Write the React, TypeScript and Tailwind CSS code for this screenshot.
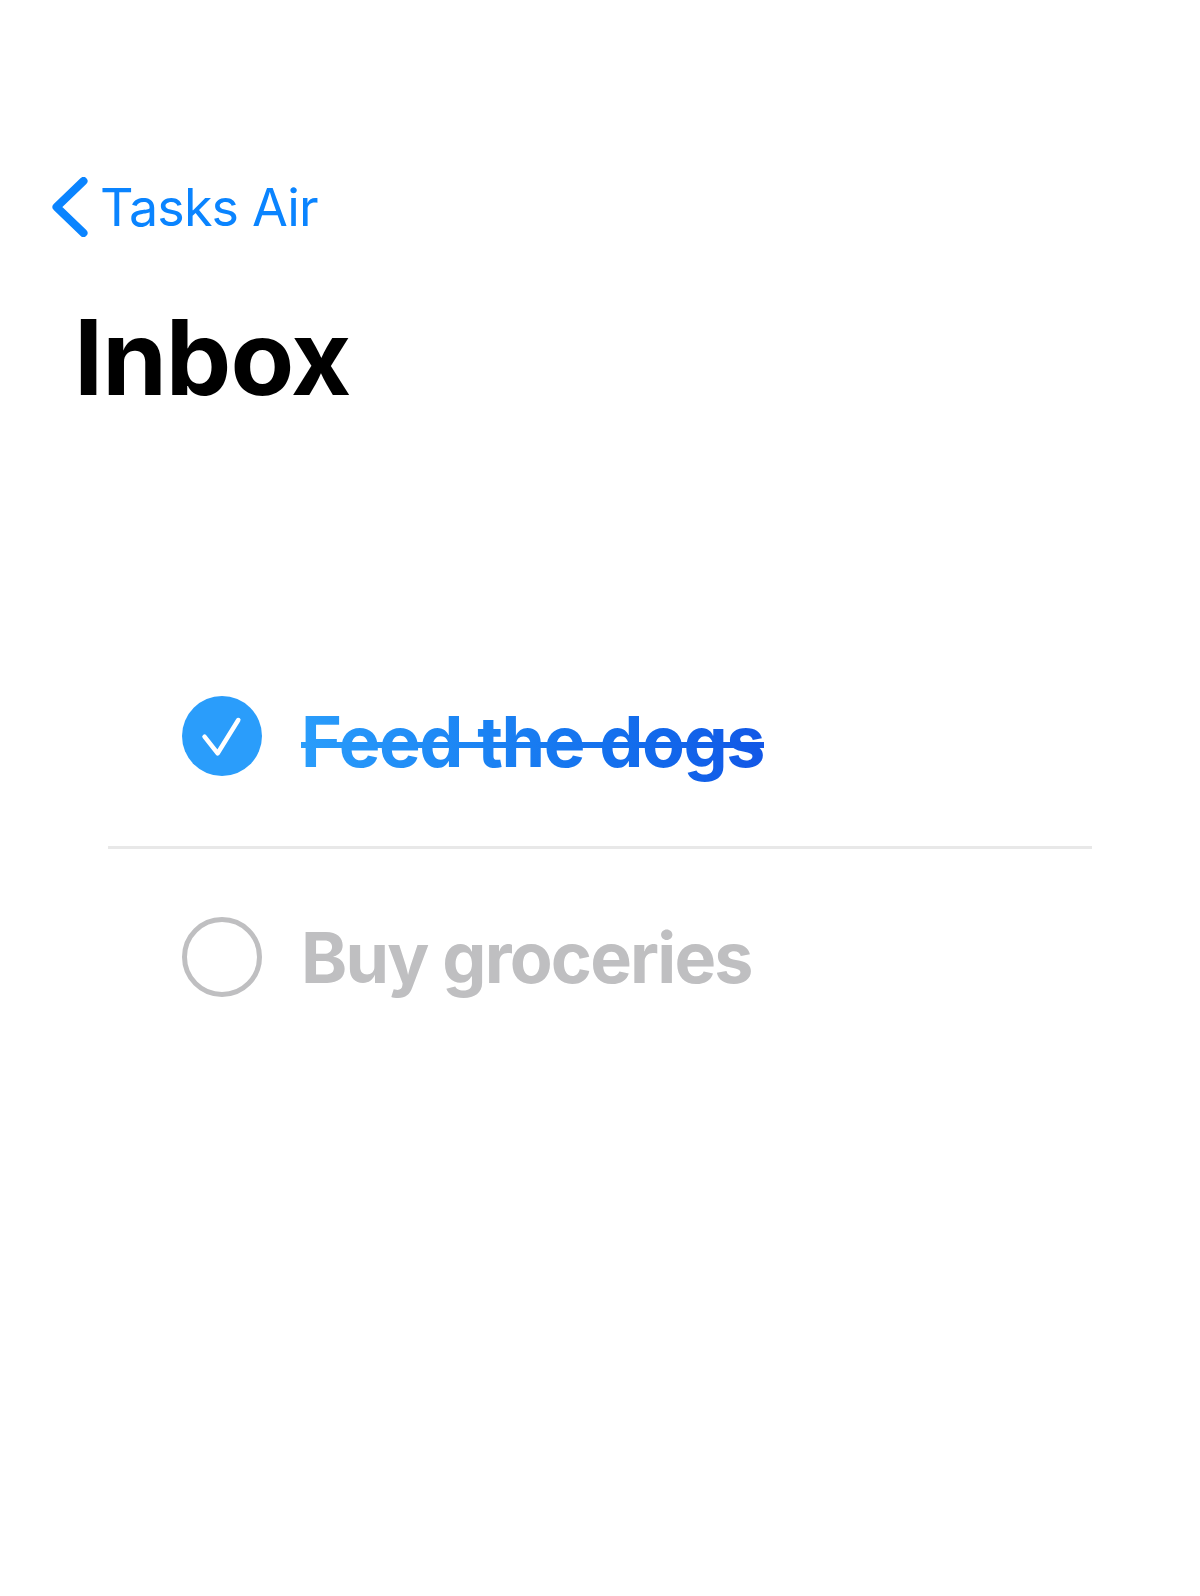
const FONT = "font-['Inter','Liberation_Sans',sans-serif]";

export default function App() {
  return (
    <div className={`w-[1200px] h-[1596px] bg-white ${FONT}`}>
      <header className="pt-[177px] pl-[52px]">
        <div className="flex items-center h-[60px] gap-[12px]">
          <svg width="36" height="60" viewBox="0 0 36 60" fill="none" className="text-[#0a84ff]">
            <path d="M31.5 4 L4.5 30 L31.5 56" stroke="currentColor" strokeWidth="8" strokeLinecap="round" strokeLinejoin="round" />
          </svg>
          <span className="mt-[2px] text-[52px] leading-[60px] font-normal tracking-[-0.016em] text-[#0a84ff]">Tasks Air</span>
        </div>
        <h1 className="mt-[57px] ml-[22px] text-[104px] leading-[126px] font-[750] tracking-[-0.01em] text-black">Inbox</h1>
      </header>

      <ul className="mt-[238px] ml-[108px] w-[984px]">
        <li className="flex items-center h-[191px] pb-[32px] pl-[74px] gap-[39px] border-b-[3px] border-[#e8e8e8]">
          <span className="w-[80px] h-[80px] rounded-full bg-[#2a9dfb] shrink-0">
            <svg width="80" height="80" viewBox="0 0 80 80" fill="none">
              <path d="M22.5 40.7 L35.7 57.3 L56.3 24" stroke="white" strokeWidth="4.5" strokeLinecap="round" strokeLinejoin="round" />
            </svg>
          </span>
          <span className="relative mt-[12px]">
            <span className="text-[70px] leading-[84px] font-bold tracking-[-0.02em] bg-gradient-to-r from-[#2a9dfb] to-[#1257e6] bg-clip-text text-transparent">
              Feed the dogs
            </span>
            {/* strike line sits over the text, same gradient */}
            <span className="absolute left-0 right-0 top-[42px] h-[6px] bg-gradient-to-r from-[#2a9dfb] to-[#1257e6]" />
          </span>
        </li>
        <li className="flex items-center h-[216px] pl-[74px] gap-[39px]">
          <span className="w-[80px] h-[80px] rounded-full border-[5px] border-[#bfbfc1] shrink-0" />
          <span className="mt-[2px] text-[70px] leading-[84px] font-bold tracking-[-0.026em] text-[#bfbfc1]">Buy groceries</span>
        </li>
      </ul>
    </div>
  );
}
